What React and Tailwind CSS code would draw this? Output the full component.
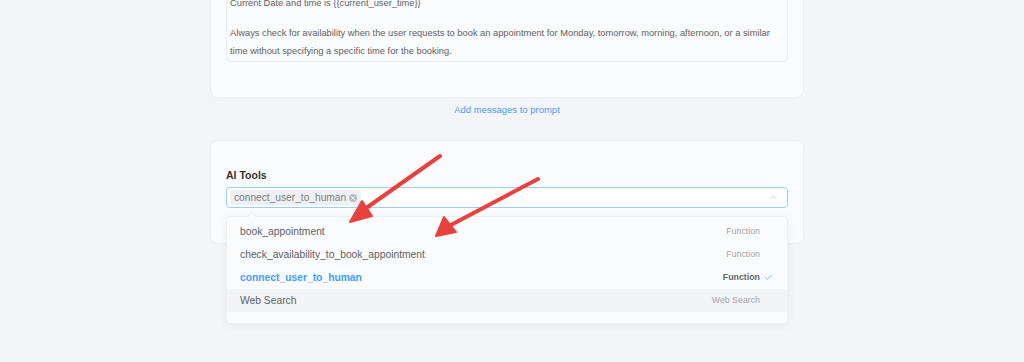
import { X, ChevronUp, Check } from 'lucide-react';

const tools = [
    { name: 'book_appointment', type: 'Function' },
    { name: 'check_availability_to_book_appointment', type: 'Function' },
    { name: 'connect_user_to_human', type: 'Function', selected: true },
    { name: 'Web Search', type: 'Web Search', hover: true },
];

const App = () => {
    return (
        <div
            className="relative w-[1024px] h-[362px] overflow-hidden bg-[#f4f5f8] text-[#606266]"
            style={{ fontFamily: '"Liberation Sans", Arial, sans-serif' }}
        >
            <div className="ml-[210px] w-[594px] flex flex-col">
                {/* Prompt card */}
                <div className="-mt-[28px] bg-[#fafbfd] border border-[#edeff3] rounded-lg px-[15px] pt-4 pb-[35px]">
                    <div className="border border-[#eceef2] rounded bg-[#fafbfd] px-[3px] pb-[1px] text-[9.3px] leading-[18px]">
                        <p className="pt-[4px]">Current Date and time is {'{{current_user_time}}'}</p>
                        <p className="h-[12px]"></p>
                        <p>
                            Always check for availability when the user requests to book an appointment for Monday, tomorrow, morning, afternoon, or a similar
                            time without specifying a specific time for the booking.
                        </p>
                    </div>
                </div>

                <div className="h-[42px] flex items-start justify-center pt-[6px]">
                    <button className="text-[#4a9af0] text-[9.5px] leading-[12px]">Add messages to prompt</button>
                </div>

                {/* AI Tools card */}
                <div className="bg-[#fafbfd] border border-[#edeff3] rounded-lg px-[15px] pt-[27px] pb-[35px]">
                    <h3 className="font-bold text-[#333] text-[10.5px] leading-[14px] mb-[5px]">AI Tools</h3>
                    <div className="relative h-[21px] border border-[#9ecbf7] rounded bg-white flex items-center pl-[3px] pr-2">
                        <span className="flex items-center gap-[3px] h-[15px] px-[4px] rounded bg-[#eff0f3] text-[#7a7d84] text-[10.2px]">
                            connect_user_to_human
                            <span className="w-[8px] h-[8px] rounded-full bg-[#b9bcc2] flex items-center justify-center">
                                <X className="w-[6px] h-[6px] text-white" strokeWidth={3} />
                            </span>
                        </span>
                        <ChevronUp className="ml-auto w-[11px] h-[11px] text-[#c0c4cc]" strokeWidth={1.5} />

                        {/* dropdown */}
                        <div className="absolute -left-px -right-px top-[28px] z-10 bg-[#fafbfd] border border-[#eceef2] rounded shadow-[0_2px_8px_rgba(0,0,0,0.06)] pt-[3px] pb-[11px]">
                            <span className="absolute -top-[4px] left-[21px] w-[7px] h-[7px] rotate-45 bg-[#fafbfd] border-l border-t border-[#eceef2]"></span>
                            {tools.map((tool) => (
                                <div
                                    key={tool.name}
                                    className={`h-[23px] flex items-center pl-[13px] pr-[27px] ${tool.hover ? 'bg-[#f2f4f7]' : ''}`}
                                >
                                    <span className={tool.selected ? 'text-[#409eff] font-bold text-[10.3px]' : 'text-[#606266] text-[10.3px]'}>
                                        {tool.name}
                                    </span>
                                    <span className={`ml-auto text-[8.8px] ${tool.selected ? 'font-bold text-[#666]' : 'text-[#a3a6ad]'}`}>
                                        {tool.type}
                                    </span>
                                    {tool.selected && (
                                        <Check className="absolute right-[14px] w-[9px] h-[9px] text-[#409eff]" strokeWidth={2} />
                                    )}
                                </div>
                            ))}
                        </div>
                    </div>
                </div>
            </div>

            {/* annotation arrows */}
            <svg className="absolute inset-0 z-20 pointer-events-none" width="1024" height="362">
                <g stroke="#e8423f" strokeWidth="4" strokeLinecap="round" fill="#e8423f">
                    <line x1="440" y1="156" x2="362" y2="211" />
                    <polygon points="350,222 362,201 372,216" strokeWidth="2" strokeLinejoin="round" />
                    <line x1="538" y1="179" x2="449" y2="226" />
                    <polygon points="436,236 444,217 456,232" strokeWidth="2" strokeLinejoin="round" />
                </g>
            </svg>
        </div>
    );
};

export default App;
